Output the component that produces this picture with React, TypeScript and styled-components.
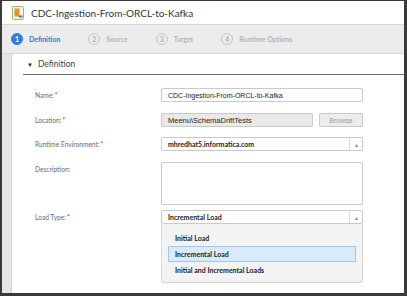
import { FC } from 'react';
import styled, { createGlobalStyle } from 'styled-components';

const GlobalStyle = createGlobalStyle`
  html, body {
    margin: 0;
    padding: 0;
    background: #3a3a3a;
  }
  * {
    box-sizing: border-box;
  }
`;

const steps = [
  { n: 1, label: 'Definition' },
  { n: 2, label: 'Source' },
  { n: 3, label: 'Target' },
  { n: 4, label: 'Runtime Options' },
];

const loadOptions = ['Initial Load', 'Incremental Load', 'Initial and Incremental Loads'];

const TaskIcon: FC = () => (
  <svg width="12" height="14" viewBox="0 0 12 14">
    <rect x="0.5" y="0.5" width="11" height="13" rx="1" fill="#eef6e4" stroke="#8cc063" />
    <rect x="2.5" y="2.5" width="5" height="8" fill="#f28c28" />
    <rect x="7" y="9.5" width="3.5" height="2" fill="#2f7fd8" />
  </svg>
);

const App: FC = () => {
  return (
    <>
      <GlobalStyle />
      <Frame>
        <TitleBar>
          <TaskIcon />
          <Title>CDC-Ingestion-From-ORCL-to-Kafka</Title>
        </TitleBar>
        <StepBar>
          {steps.map((s) => (
            <Step key={s.n}>
              <StepCircle $active={s.n === 1}>{s.n}</StepCircle>
              <StepLabel $active={s.n === 1}>{s.label}</StepLabel>
            </Step>
          ))}
        </StepBar>
        <Body>
          <Panel>
            <SectionHeader>
              <Caret>▼</Caret>
              <span>Definition</span>
            </SectionHeader>
            <Form>
              <Row $h={25}>
                <Label>
                  Name:<Req>*</Req>
                </Label>
                <TextInput>CDC-Ingestion-From-ORCL-to-Kafka</TextInput>
              </Row>
              <Row $h={24}>
                <Label>
                  Location:<Req>*</Req>
                </Label>
                <LocationGroup>
                  <ReadOnlyInput>Meenu\SchemaDriftTests</ReadOnlyInput>
                  <BrowseButton>Browse</BrowseButton>
                </LocationGroup>
              </Row>
              <Row $h={25}>
                <Label>
                  Runtime Environment:<Req>*</Req>
                </Label>
                <Select>
                  <SelectValue>mhredhat5.informatica.com</SelectValue>
                  <SelectArrow>▴</SelectArrow>
                </Select>
              </Row>
              <Row $h={48}>
                <Label>Description:</Label>
                <TextArea />
              </Row>
              <Row $h={14}>
                <Label>
                  Load Type:<Req>*</Req>
                </Label>
                <SelectWrap>
                  <Select>
                    <SelectValue>Incremental Load</SelectValue>
                    <SelectArrow>▴</SelectArrow>
                  </Select>
                  <Menu>
                    {loadOptions.map((o) => (
                      <MenuItem key={o} $selected={o === 'Incremental Load'}>
                        {o}
                      </MenuItem>
                    ))}
                  </Menu>
                </SelectWrap>
              </Row>
            </Form>
          </Panel>
        </Body>
      </Frame>
    </>
  );
};

export default App;

const Frame = styled.div`
  width: 407px;
  height: 296px;
  border-style: solid;
  border-color: #3a3a3a;
  border-width: 1px 3px 3px 2px;
  display: flex;
  flex-direction: column;
  background: #fff;
  overflow: hidden;
`;

const TitleBar = styled.div`
  height: 24px;
  display: flex;
  align-items: center;
  gap: 7px;
  padding-left: 10px;
  background: #fff;
  border-bottom: 1px solid #d6d6d6;
`;

const Title = styled.span`
  font-family: Lato, 'Liberation Sans', sans-serif;
  font-size: 10px;
  color: #333;
`;

const StepBar = styled.div`
  height: 29px;
  display: flex;
  align-items: center;
  gap: 28px;
  padding-left: 9px;
  background: #ececec;
  border-bottom: 1px solid #d8d8d8;
`;

const Step = styled.div`
  display: flex;
  align-items: center;
  gap: 6px;
`;

const StepCircle = styled.span<{ $active?: boolean }>`
  width: 12px;
  height: 12px;
  border-radius: 50%;
  display: flex;
  align-items: center;
  justify-content: center;
  font-family: Lato, 'Liberation Sans', sans-serif;
  font-size: 7px;
  font-weight: 700;
  color: ${(p) => (p.$active ? '#fff' : '#b0b0b0')};
  background: ${(p) => (p.$active ? '#2e7fd9' : 'transparent')};
  border: 1px solid ${(p) => (p.$active ? '#2e7fd9' : '#c4c4c4')};
`;

const StepLabel = styled.span<{ $active?: boolean }>`
  font-family: Lato, 'Liberation Sans', sans-serif;
  font-size: 7px;
  font-weight: 700;
  color: ${(p) => (p.$active ? '#2e7fd9' : '#b4b4b4')};
`;

const Body = styled.div`
  flex: 1;
  display: flex;
  background: #e6e6e6;
  padding-left: 9px;
`;

const Panel = styled.div`
  flex: 1;
  background: #fff;
  border-left: 1px solid #d4d4d4;
  padding-left: 11px;
  display: flex;
  flex-direction: column;
`;

const SectionHeader = styled.div`
  height: 21px;
  display: flex;
  align-items: center;
  gap: 5px;
  padding-left: 4px;
  border-bottom: 1.5px solid #6e6e6e;
  font-family: Lato, 'Liberation Sans', sans-serif;
  font-size: 8.5px;
  color: #444;
`;

const Caret = styled.span`
  font-size: 6px;
  color: #222;
`;

const Form = styled.div`
  display: flex;
  flex-direction: column;
  padding-top: 13px;
  padding-left: 12px;
`;

const Row = styled.div<{ $h: number }>`
  height: ${(p) => p.$h}px;
  display: flex;
  align-items: flex-start;
`;

const Label = styled.div`
  width: 126px;
  line-height: 14px;
  font-family: Lato, 'Liberation Sans', sans-serif;
  font-size: 6.6px;
  color: #6a6a6a;
`;

const Req = styled.span`
  color: #e0242b;
  margin-left: 1px;
`;

const TextInput = styled.div`
  width: 202px;
  height: 14px;
  border: 1px solid #c9c9c9;
  border-radius: 2px;
  padding-left: 6px;
  display: flex;
  align-items: center;
  font-family: 'Liberation Sans', Arial, sans-serif;
  font-size: 7px;
  color: #222;
  background: #fff;
`;

const LocationGroup = styled.div`
  width: 202px;
  display: flex;
  gap: 6px;
`;

const ReadOnlyInput = styled(TextInput)`
  flex: 1;
  width: auto;
  font-size: 7.5px;
  background: #e9e9e9;
`;

const BrowseButton = styled.div`
  width: 44px;
  height: 14px;
  border: 1px solid #c9c9c9;
  border-radius: 2px;
  background: #ededed;
  display: flex;
  align-items: center;
  justify-content: center;
  font-family: 'Liberation Sans', Arial, sans-serif;
  font-size: 7px;
  color: #9a9a9a;
`;

const SelectWrap = styled.div`
  position: relative;
  width: 202px;
`;

const Select = styled.div`
  width: 202px;
  height: 14px;
  border: 1px solid #c9c9c9;
  border-radius: 2px;
  background: #fff;
  display: flex;
  align-items: stretch;
`;

const SelectValue = styled.span`
  flex: 1;
  display: flex;
  align-items: center;
  padding-left: 6px;
  font-family: Lato, 'Liberation Sans', sans-serif;
  font-size: 7px;
  font-weight: 700;
  color: #222;
`;

const SelectArrow = styled.span`
  width: 13px;
  border-left: 1px solid #dcdcdc;
  display: flex;
  align-items: center;
  justify-content: center;
  font-size: 6px;
  color: #888;
`;

const TextArea = styled.div`
  width: 202px;
  height: 43px;
  border: 1px solid #c9c9c9;
  border-radius: 2px;
  background: #fff;
`;

const Menu = styled.div`
  position: absolute;
  top: 14px;
  left: 0;
  width: 202px;
  height: 59px;
  background: #f3f3f3;
  border: 1px solid #d6d6d6;
  border-top: none;
  border-radius: 0 0 3px 3px;
  padding: 6px 6px 0 6px;
  display: flex;
  flex-direction: column;
`;

const MenuItem = styled.div<{ $selected?: boolean }>`
  height: 16px;
  display: flex;
  align-items: center;
  padding-left: 6px;
  border: 1px solid ${(p) => (p.$selected ? '#9ec8ec' : 'transparent')};
  background: ${(p) => (p.$selected ? '#d9ebfb' : 'transparent')};
  font-family: Lato, 'Liberation Sans', sans-serif;
  font-size: 7px;
  font-weight: 700;
  color: #222;
`;
